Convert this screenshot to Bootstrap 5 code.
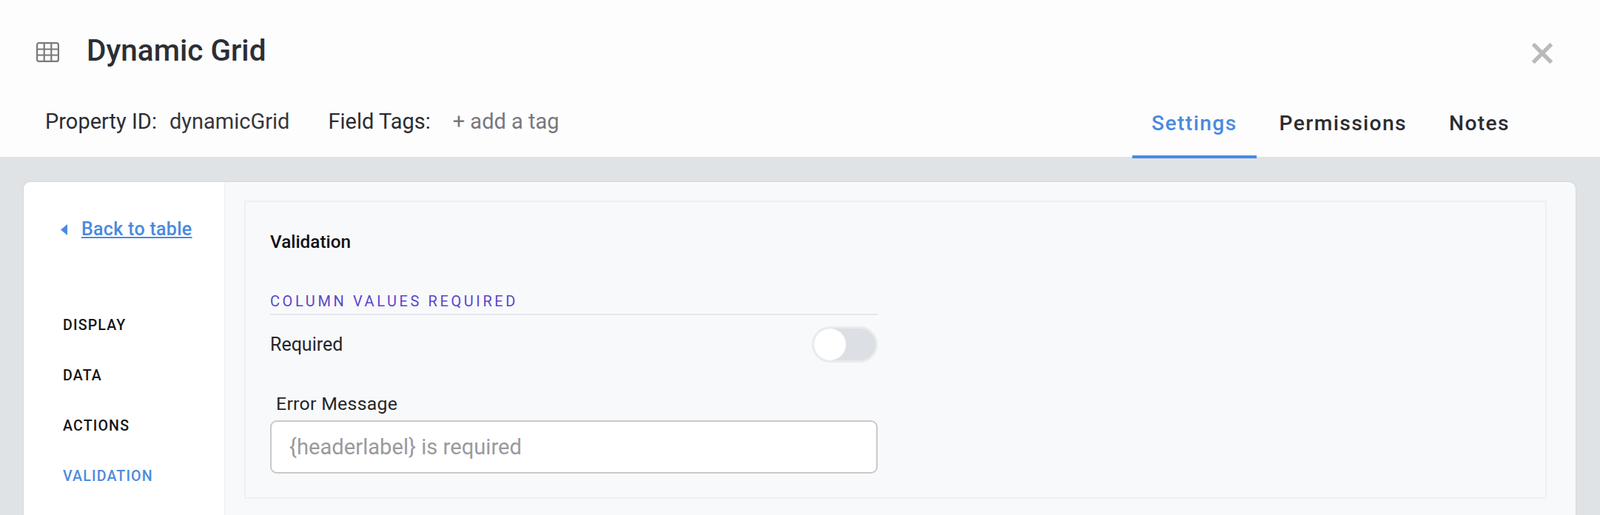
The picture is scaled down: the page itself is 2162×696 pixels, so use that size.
<!DOCTYPE html>
<html lang="en">
<head>
<meta charset="utf-8">
<title>Dynamic Grid</title>
<link href="https://cdn.jsdelivr.net/npm/bootstrap@5.3.0/dist/css/bootstrap.min.css" rel="stylesheet">
<style>
html,body{height:100%;}
body{background:#dfe3e6;font-family:Roboto,"Liberation Sans",sans-serif;overflow:hidden;color:#2b2d31;}
.dg-head{background:#fdfdfe;height:212px;position:relative;}
.dg-title-row{height:136px;padding:0 64px 0 49px;}
.dg-title{font-size:40.5px;font-weight:500;margin:0 0 0 37px;color:#2d2e33;line-height:1;}
.dg-icon{width:31px;height:27px;display:block;margin-top:4px;}
.dg-close{background:none;border:0;padding:0;line-height:0;margin-top:8px;}
.dg-meta-row{padding-left:61px;font-size:29px;height:76px;line-height:38px;margin-top:1px;}
.dg-val{margin-left:17px;color:#36373c;}
.dg-tags{margin-left:52px;}
.dg-add{margin-left:30px;color:#77787c;}
.dg-tabs{gap:0;padding-right:91px;margin-top:-1px;}
.dg-tab{display:block;height:79px;padding:11px 26px 0 26px;margin-right:5px;font-size:28.2px;font-weight:500;letter-spacing:1.4px;color:#2b2c30;text-decoration:none;border-bottom:4px solid transparent;border-radius:0;}
.dg-tab.dg-on{color:#4a8ae0;border-bottom-color:#4a8ae0;}
.dg-card{background:#f8f9fb;border:0;border-radius:9px 9px 0 0;margin:34px 33px 0 32px;flex-grow:1;overflow:hidden;flex-direction:row;box-shadow:0 0 2px rgba(80,90,100,.25);}
.dg-side{width:272px;background:#fff;flex:none;border-right:1px solid #edeff2;padding:51px 0 0 50px;}
.dg-back{font-size:25px;font-weight:500;color:#4a8ae0;letter-spacing:.3px;line-height:26px;}
.dg-arrow{width:9px;height:15px;margin-right:19px;display:block;}
.dg-items{margin-top:105px;padding-left:3px;}
.dg-item{display:block;font-size:19.6px;font-weight:500;letter-spacing:1.15px;line-height:24px;height:68px;color:#131417;text-decoration:none;padding:0;}
.dg-item.dg-on{color:#4a8ae0;}
.dg-main{flex-grow:1;padding:25px 39px 0 26px;}
.dg-panel{background:#f8f9fb;border:2px solid #eff0f3;height:403px;padding:0 33px;}
.dg-h{font-size:24.3px;font-weight:500;color:#101114;margin:41px 0 0;line-height:26px;}
.dg-formcol{width:821px;}
.dg-sec{font-size:20px;font-weight:400;letter-spacing:3.6px;color:#5a46c8;line-height:22px;margin-top:56px;padding-bottom:6px;border-bottom:2px solid #e6e7eb;}
.dg-reqrow{margin-top:15px;height:49px;font-size:25px;color:#25262b;}
.dg-switch{padding:0;margin:0;min-height:0;}
.dg-switch .form-check-input{width:89px;height:49px;margin:0;background-color:#dcdfe3;border:3px solid #e9ebee;border-radius:25px;box-shadow:none;background-position:left center;background-image:url("data:image/svg+xml,%3csvg xmlns='http://www.w3.org/2000/svg' viewBox='-4 -4 8 8'%3e%3ccircle r='4' fill='%23fff'/%3e%3c/svg%3e");float:none;}
.dg-label{display:block;font-size:24.8px;line-height:28px;margin:42px 0 8px 8px;color:#25262b;letter-spacing:.3px;}
.dg-input.form-control{height:72px;border:2px solid #c9c9cc;border-radius:9px;font-size:29.2px;padding:0 24px;background:#fff;box-shadow:none;}
.dg-input.form-control::placeholder{color:#9a9a9c;opacity:1;}
</style>
</head>
<body class="d-flex flex-column">
<header class="dg-head flex-none">
  <div class="dg-title-row d-flex align-items-center">
    <svg class="dg-icon" viewBox="0 0 31 27" fill="none" stroke="#7a7a7d" stroke-width="2.2"><rect x="1.1" y="1.1" width="28.8" height="24.8" rx="2.5"/><path d="M1 9.5H30M1 17.5H30M10.7 1V26M20.3 1V26"/></svg>
    <h1 class="dg-title">Dynamic Grid</h1>
    <button class="dg-close ms-auto" type="button" aria-label="Close"><svg width="28" height="28" viewBox="0 0 28 28" stroke="#bababa" stroke-width="5.4" stroke-linecap="square"><path d="M3.5 3.5L24.5 24.5M24.5 3.5L3.5 24.5"/></svg></button>
  </div>
  <div class="d-flex align-items-start justify-content-between">
    <div class="dg-meta-row d-flex align-items-start pt-2">
      <span>Property ID:</span><span class="dg-val">dynamicGrid</span>
      <span class="dg-tags">Field Tags:</span><span class="dg-add">+ add a tag</span>
    </div>
    <nav class="nav dg-tabs">
      <a class="nav-link dg-tab dg-on" href="#">Settings</a>
      <a class="nav-link dg-tab" href="#">Permissions</a>
      <a class="nav-link dg-tab" href="#">Notes</a>
    </nav>
  </div>
</header>
<section class="card dg-card">
  <aside class="dg-side">
    <div class="d-flex align-items-center">
      <svg class="dg-arrow" viewBox="0 0 9 15"><path d="M9 0V15L0 7.5Z" fill="#4a8ae0"/></svg>
      <a class="dg-back" href="#">Back to table</a>
    </div>
    <div class="dg-items">
      <a class="dg-item" href="#">DISPLAY</a>
      <a class="dg-item" href="#">DATA</a>
      <a class="dg-item" href="#">ACTIONS</a>
      <a class="dg-item dg-on" href="#">VALIDATION</a>
    </div>
  </aside>
  <main class="dg-main">
    <div class="dg-panel">
      <h2 class="dg-h">Validation</h2>
      <div class="dg-formcol">
        <div class="dg-sec">COLUMN VALUES REQUIRED</div>
        <div class="dg-reqrow d-flex align-items-center justify-content-between">
          <span>Required</span>
          <div class="form-check form-switch dg-switch"><input class="form-check-input" type="checkbox" role="switch" aria-label="Required"></div>
        </div>
        <label class="dg-label" for="dgErr">Error Message</label>
        <input id="dgErr" class="form-control dg-input" type="text" placeholder="{headerlabel} is required">
      </div>
    </div>
  </main>
</section>
<script src="https://cdn.jsdelivr.net/npm/bootstrap@5.3.0/dist/js/bootstrap.bundle.min.js"></script>
</body>
</html>
